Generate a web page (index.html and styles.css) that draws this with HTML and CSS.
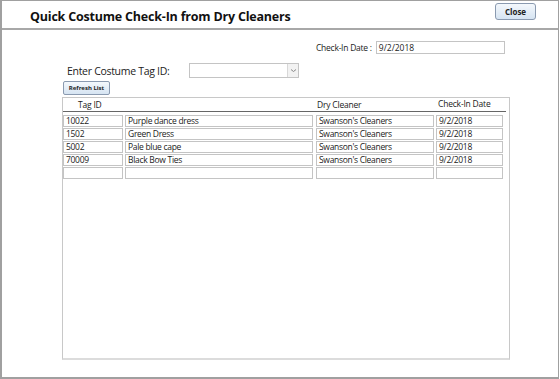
FILE: index.html
```html
<!DOCTYPE html>
<html lang="en">
<head>
  <meta charset="UTF-8">
  <title>Quick Costume Check-In from Dry Cleaners</title>
  <link rel="stylesheet" href="styles.css">
</head>
<body>
  <div class="window">
    <div class="header">
      <h1>Quick Costume Check-In from Dry Cleaners</h1>
      <button class="close-button">Close</button>
    </div>

    <div class="form">
      <div class="date-row">
        <span class="date-label">Check-In Date :</span>
        <div class="text-box date-box">9/2/2018</div>
      </div>

      <div class="tag-row">
        <span class="tag-label">Enter Costume Tag ID:</span>
        <div class="combo">
          <div class="combo-arrow">
            <svg width="7" height="5" viewBox="0 0 7 5"><path d="M1 1.5 L3.5 3.5 L6 1.5" fill="none" stroke="#888" stroke-width="1"/></svg>
          </div>
        </div>
      </div>

      <button class="refresh-button">Refresh List</button>

      <div class="list">
        <div class="list-header">
          <span class="col-tag">Tag ID</span>
          <span class="col-desc"></span>
          <span class="col-cleaner">Dry Cleaner</span>
          <span class="col-date">Check-In Date</span>
        </div>
        <div class="rows">
          <div class="row">
            <div class="cell col-tag">10022</div>
            <div class="cell col-desc">Purple dance dress</div>
            <div class="cell col-cleaner">Swanson's Cleaners</div>
            <div class="cell col-date">9/2/2018</div>
          </div>
          <div class="row">
            <div class="cell col-tag">1502</div>
            <div class="cell col-desc">Green Dress</div>
            <div class="cell col-cleaner">Swanson's Cleaners</div>
            <div class="cell col-date">9/2/2018</div>
          </div>
          <div class="row">
            <div class="cell col-tag">5002</div>
            <div class="cell col-desc">Pale blue cape</div>
            <div class="cell col-cleaner">Swanson's Cleaners</div>
            <div class="cell col-date">9/2/2018</div>
          </div>
          <div class="row">
            <div class="cell col-tag">70009</div>
            <div class="cell col-desc">Black Bow Ties</div>
            <div class="cell col-cleaner">Swanson's Cleaners</div>
            <div class="cell col-date">9/2/2018</div>
          </div>
          <div class="row">
            <div class="cell col-tag"></div>
            <div class="cell col-desc"></div>
            <div class="cell col-cleaner"></div>
            <div class="cell col-date"></div>
          </div>
        </div>
      </div>
    </div>
  </div>
</body>
</html>
```

FILE: styles.css
```css
body {
  margin: 0;
  font-family: "Open Sans", "Noto Sans", sans-serif;
  color: #222;
  background-color: #fff;
}

.window {
  width: 556px;
  height: 376px;
  border: 1px solid #a0a0a0;
  border-left-width: 2px;
  border-bottom-width: 2px;
  background-color: #fff;
}

.header {
  height: 27px;
  border-bottom: 2px solid #a8a8a8;
  display: flex;
  align-items: flex-start;
  justify-content: space-between;
}

h1 {
  margin: 7px 0 0 28px;
  font-size: 12.5px;
  font-weight: 700;
  letter-spacing: -0.2px;
  color: #111;
}

.close-button {
  margin: 2px 22px 0 0;
  width: 41px;
  height: 17px;
  padding: 0;
  font-family: inherit;
  font-size: 8px;
  font-weight: 700;
  color: #222;
  border: 1px solid #8a9ab0;
  border-radius: 3px;
  background: linear-gradient(#f4f8fc, #d6e4f2);
}

.form {
  padding: 0 0 0 60px;
}

.date-row {
  display: flex;
  align-items: center;
  margin: 11px 0 0 254px;
}

.date-label {
  font-size: 8.5px;
  letter-spacing: -0.25px;
  margin-right: 4px;
}

.text-box {
  box-sizing: border-box;
  border: 1px solid #c4c4c4;
  font-size: 8.5px;
  padding-left: 2px;
  line-height: 11px;
}

.date-box {
  width: 129px;
  height: 13px;
}

.tag-row {
  display: flex;
  align-items: center;
  margin: 9px 0 0 5px;
}

.tag-label {
  font-size: 10.5px;
  letter-spacing: -0.3px;
  width: 122px;
}

.combo {
  box-sizing: border-box;
  width: 110px;
  height: 15px;
  border: 1px solid #c4c4c4;
  display: flex;
  justify-content: flex-end;
}

.combo-arrow {
  width: 10px;
  border-left: 1px solid #d8d8d8;
  background-color: #f2f2f2;
  display: flex;
  align-items: center;
  justify-content: center;
}

.refresh-button {
  display: block;
  margin: 3px 0 0 1px;
  width: 47px;
  height: 14px;
  padding: 0;
  font-family: inherit;
  font-size: 6px;
  font-weight: 700;
  color: #222;
  border: 1px solid #8a9ab0;
  border-radius: 2px;
  background: linear-gradient(#f4f8fc, #d6e4f2);
}

.list {
  box-sizing: border-box;
  margin-top: 2px;
  width: 448px;
  height: 263px;
  border: 1px solid #c8c8c8;
  border-bottom: 2px solid #dcdcdc;
}

.list-header {
  display: flex;
  gap: 3px;
  height: 13px;
  margin-right: 3px;
  border-bottom: 1px solid #666;
  font-size: 8.5px;
  letter-spacing: -0.2px;
  line-height: 13px;
}

.list-header .col-tag {
  padding-left: 15px;
  box-sizing: border-box;
}

.list-header .col-date {
  line-height: 11px;
}

.rows {
  padding-top: 3px;
}

.row {
  display: flex;
  gap: 2px;
  margin-bottom: 1px;
}

.cell {
  box-sizing: border-box;
  height: 12px;
  border: 1px solid #c4c4c4;
  font-size: 8.5px;
  letter-spacing: -0.3px;
  line-height: 10px;
  padding-left: 2px;
  white-space: nowrap;
  overflow: hidden;
}

.col-tag {
  width: 60px;
}

.col-desc {
  width: 188px;
}

.col-cleaner {
  width: 118px;
  margin-left: 1px;
}

.list-header .col-cleaner {
  margin-left: 0;
}

.col-date {
  width: 67px;
}
```
